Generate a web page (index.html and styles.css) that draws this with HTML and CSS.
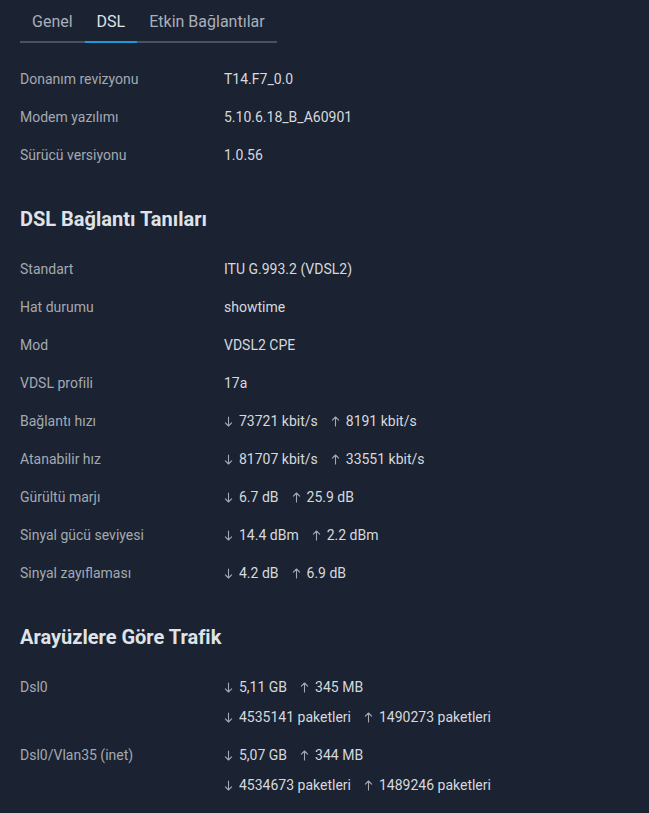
FILE: index.html
```html
<!DOCTYPE html>
<html lang="tr">
    <head>
        <title>DSL</title>
        <meta charset="utf-8">
        <link rel="stylesheet" href="styles.css">
    </head>

    <body>
        <div class="sekmeler">
            <div class="sekme">Genel</div>
            <div class="sekme aktif">DSL</div>
            <div class="sekme">Etkin Bağlantılar</div>
        </div>

        <div class="tablo">
            <div class="satir"><div class="etiket">Donanım revizyonu</div><div class="deger">T14.F7_0.0</div></div>
            <div class="satir"><div class="etiket">Modem yazılımı</div><div class="deger">5.10.6.18_B_A60901</div></div>
            <div class="satir"><div class="etiket">Sürücü versiyonu</div><div class="deger">1.0.56</div></div>
        </div>

        <h2 class="baslik">DSL Bağlantı Tanıları</h2>

        <div class="tablo">
            <div class="satir"><div class="etiket">Standart</div><div class="deger">ITU G.993.2 (VDSL2)</div></div>
            <div class="satir"><div class="etiket">Hat durumu</div><div class="deger">showtime</div></div>
            <div class="satir"><div class="etiket">Mod</div><div class="deger">VDSL2 CPE</div></div>
            <div class="satir"><div class="etiket">VDSL profili</div><div class="deger">17a</div></div>
            <div class="satir"><div class="etiket">Bağlantı hızı</div><div class="deger"><svg class="ok" viewBox="0 0 10 12"><path d="M5 1V11M1.5 7.5L5 11L8.5 7.5"/></svg>73721 kbit/s<svg class="ok yukari" viewBox="0 0 10 12"><path d="M5 11V1M1.5 4.5L5 1L8.5 4.5"/></svg>8191 kbit/s</div></div>
            <div class="satir"><div class="etiket">Atanabilir hız</div><div class="deger"><svg class="ok" viewBox="0 0 10 12"><path d="M5 1V11M1.5 7.5L5 11L8.5 7.5"/></svg>81707 kbit/s<svg class="ok yukari" viewBox="0 0 10 12"><path d="M5 11V1M1.5 4.5L5 1L8.5 4.5"/></svg>33551 kbit/s</div></div>
            <div class="satir"><div class="etiket">Gürültü marjı</div><div class="deger"><svg class="ok" viewBox="0 0 10 12"><path d="M5 1V11M1.5 7.5L5 11L8.5 7.5"/></svg>6.7 dB<svg class="ok yukari" viewBox="0 0 10 12"><path d="M5 11V1M1.5 4.5L5 1L8.5 4.5"/></svg>25.9 dB</div></div>
            <div class="satir"><div class="etiket">Sinyal gücü seviyesi</div><div class="deger"><svg class="ok" viewBox="0 0 10 12"><path d="M5 1V11M1.5 7.5L5 11L8.5 7.5"/></svg>14.4 dBm<svg class="ok yukari" viewBox="0 0 10 12"><path d="M5 11V1M1.5 4.5L5 1L8.5 4.5"/></svg>2.2 dBm</div></div>
            <div class="satir"><div class="etiket">Sinyal zayıflaması</div><div class="deger"><svg class="ok" viewBox="0 0 10 12"><path d="M5 1V11M1.5 7.5L5 11L8.5 7.5"/></svg>4.2 dB<svg class="ok yukari" viewBox="0 0 10 12"><path d="M5 11V1M1.5 4.5L5 1L8.5 4.5"/></svg>6.9 dB</div></div>
        </div>

        <h2 class="baslik">Arayüzlere Göre Trafik</h2>

        <div class="tablo">
            <div class="satir">
                <div class="etiket">Dsl0</div>
                <div class="deger">
                    <div><svg class="ok" viewBox="0 0 10 12"><path d="M5 1V11M1.5 7.5L5 11L8.5 7.5"/></svg>5,11 GB<svg class="ok yukari" viewBox="0 0 10 12"><path d="M5 11V1M1.5 4.5L5 1L8.5 4.5"/></svg>345 MB</div>
                    <div class="alt"><svg class="ok" viewBox="0 0 10 12"><path d="M5 1V11M1.5 7.5L5 11L8.5 7.5"/></svg>4535141 paketleri<svg class="ok yukari" viewBox="0 0 10 12"><path d="M5 11V1M1.5 4.5L5 1L8.5 4.5"/></svg>1490273 paketleri</div>
                </div>
            </div>
            <div class="satir">
                <div class="etiket">Dsl0/Vlan35 (inet)</div>
                <div class="deger">
                    <div><svg class="ok" viewBox="0 0 10 12"><path d="M5 1V11M1.5 7.5L5 11L8.5 7.5"/></svg>5,07 GB<svg class="ok yukari" viewBox="0 0 10 12"><path d="M5 11V1M1.5 4.5L5 1L8.5 4.5"/></svg>344 MB</div>
                    <div class="alt"><svg class="ok" viewBox="0 0 10 12"><path d="M5 1V11M1.5 7.5L5 11L8.5 7.5"/></svg>4534673 paketleri<svg class="ok yukari" viewBox="0 0 10 12"><path d="M5 11V1M1.5 4.5L5 1L8.5 4.5"/></svg>1489246 paketleri</div>
                </div>
            </div>
        </div>
    </body>
</html>
```

FILE: styles.css
```css
*, *::before, *::after{
    box-sizing: border-box;
}

body{
    margin: 0;
    padding: 0 20px;
    background-color: #1b2231;
    font-family: Roboto, "Noto Sans", sans-serif;
    font-size: 14px;
    color: #d3d7dd;
}

.sekmeler{
    display: flex;
    width: 257px;
    border-bottom: 2px solid #4a5261;
    margin-bottom: 17px;
}

.sekme{
    padding: 12px 12px 9px 12px;
    font-size: 16px;
    line-height: 20px;
    color: #a9b0ba;
    margin-bottom: -2px;
    border-bottom: 2px solid transparent;
}

.aktif{
    color: #dfe2e7;
    border-bottom-color: #1b9ad7;
}

.tablo{
    display: flex;
    flex-direction: column;
}

.satir{
    display: flex;
    padding: 9px 0;
    line-height: 20px;
}

.etiket{
    width: 204px;
    flex-shrink: 0;
    color: #a3a9b2;
}

.deger{
    color: #d6d9de;
}

.alt{
    margin-top: 10px;
}

.ok{
    width: 9px;
    height: 11px;
    margin-right: 6px;
    vertical-align: -1px;
    fill: none;
    stroke: #a3a9b2;
    stroke-width: 1.2;
    stroke-linecap: round;
    stroke-linejoin: round;
}

.yukari{
    margin-left: 13px;
}

.baslik{
    margin: 33px 0 19px 0;
    font-size: 20px;
    line-height: 24px;
    font-weight: bold;
    color: #dfe2e7;
}
```
